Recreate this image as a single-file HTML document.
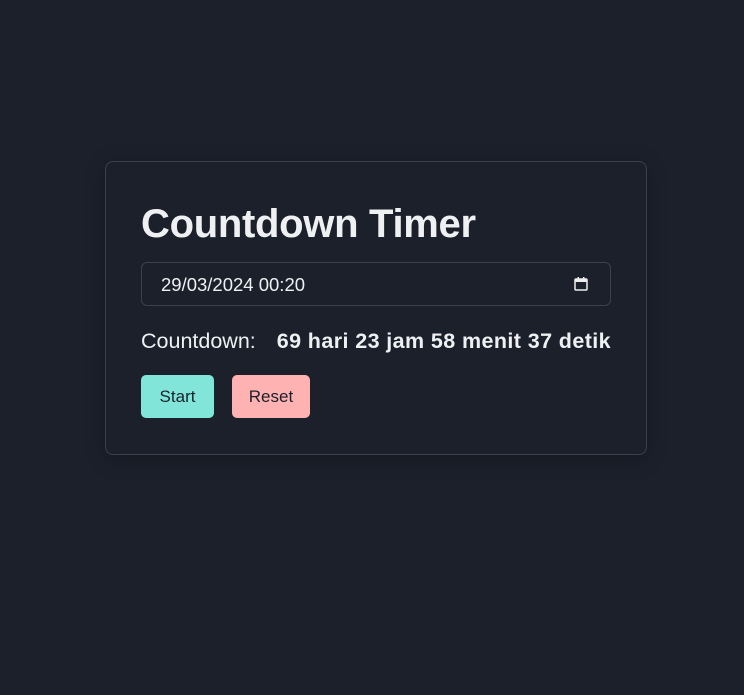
<!DOCTYPE html>
<html><head><style>
html,body{margin:0;padding:0;background:#1b202b;width:744px;height:695px;overflow:hidden;font-family:"Liberation Sans",sans-serif;color:#eef0f2}
.card{position:absolute;left:105px;top:161px;width:540px;height:292px;border:1px solid #3b404b;border-radius:8px;box-shadow:0 4px 20px rgba(0,0,0,.25)}
h1{position:absolute;left:35px;top:39px;margin:0;font-size:40px;font-weight:bold;line-height:46px;letter-spacing:-0.3px}
.inp{position:absolute;left:35px;top:100px;width:468px;height:42px;border:1px solid #3b404b;border-radius:6px;font-size:18.5px;line-height:44px}
.inp span{position:absolute;left:19px}
.inp svg{position:absolute;right:21px;top:13px}
.cd{position:absolute;left:35px;top:165px;font-size:21.5px;line-height:28px;white-space:nowrap}
.cd b{margin-left:15px;font-size:21.5px;letter-spacing:0.4px}
.btn{position:absolute;top:213px;height:43px;border-radius:5px;color:#1b202b;font-size:17px;line-height:44px;text-align:center}
</style></head><body>
<div class="card">
<h1>Countdown Timer</h1>
<div class="inp"><span>29/03/2024 00:20</span>
<svg width="16" height="16" viewBox="0 0 16 16"><rect x="2" y="3" width="12" height="11" rx="1" fill="none" stroke="#eee" stroke-width="1.5"/><rect x="2" y="3" width="12" height="3" fill="#eee"/><rect x="4.5" y="1" width="1.5" height="3" fill="#eee"/><rect x="10" y="1" width="1.5" height="3" fill="#eee"/></svg></div>
<div class="cd">Countdown: <b>69 hari 23 jam 58 menit 37 detik</b></div>
<div class="btn" style="left:35px;width:73px;background:#81e6d9">Start</div>
<div class="btn" style="left:126px;width:78px;background:#feb2b2">Reset</div>
</div>
</body></html>
